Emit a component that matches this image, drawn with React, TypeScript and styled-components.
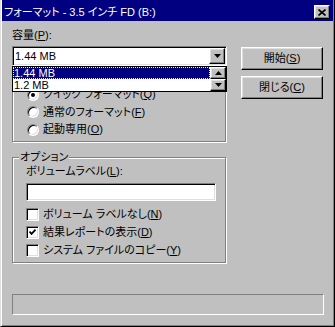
import React from "react";
import styled, { createGlobalStyle } from "styled-components";

const GlobalStyle = createGlobalStyle`
  html, body { margin: 0; padding: 0; background: #c0c0c0; }
  body {
    font-family: "Liberation Sans", "Noto Sans CJK JP", sans-serif;
    font-size: 11px;
    font-feature-settings: "palt";
    color: #000;
  }
  * { box-sizing: border-box; }
`;

const Window = styled.div`
  width: 335px;
  height: 327px;
  background: #c0c0c0;
  border-left: 1px solid #dfdfdf;
  border-right: 1px solid #000;
  border-bottom: 1px solid #000;
  box-shadow: inset 1px 0 0 #fff, inset -1px -1px 0 #808080;
  padding: 0 1px 1px 1px;
  display: flex;
  flex-direction: column;
`;

const TitleBar = styled.div`
  height: 21px;
  background: #000080;
  display: flex;
  align-items: center;
  justify-content: space-between;
  padding: 3px 3px 0 2px;
`;

const Title = styled.span`
  color: #fff;
  line-height: 13px;
  white-space: nowrap;
`;

const Raised = styled.div`
  background: #c0c0c0;
  border: 1px solid;
  border-color: #fff #000 #000 #fff;
  box-shadow: inset -1px -1px 0 #808080, inset 1px 1px 0 #dfdfdf;
  display: flex;
  align-items: center;
  justify-content: center;
`;

const CloseBtn = styled(Raised)`
  width: 16px;
  height: 14px;
`;

const Body = styled.div`
  padding: 8px 9px 0 10px;
  display: flex;
  flex-direction: column;
`;

const Top = styled.div`
  display: flex;
  align-items: flex-start;
  gap: 14px;
`;

const LeftCol = styled.div`
  width: 215px;
  display: flex;
  flex-direction: column;
`;

const Label = styled.div`
  line-height: 13px;
  height: 13px;
  white-space: nowrap;
`;

const Text = styled.span`
  white-space: nowrap;
  line-height: 13px;
`;

const Key = styled.span`
  text-decoration: underline;
  text-underline-offset: 1px;
`;

const ComboWrap = styled.div`
  position: relative;
  margin-top: 4px;
  height: 20px;
`;

const Sunken = styled.div`
  background: #fff;
  border: 1px solid;
  border-color: #808080 #fff #fff #808080;
  box-shadow: inset 1px 1px 0 #000, inset -1px -1px 0 #dfdfdf;
`;

const Combo = styled(Sunken)`
  height: 20px;
  display: flex;
  align-items: center;
  padding: 0 1px 0 2px;
  line-height: 13px;
`;

const ArrowBtn = styled(Raised)<{ $h: number }>`
  width: 16px;
  height: ${(p) => p.$h}px;
  margin-left: auto;
  flex: none;
`;

const DropList = styled.div`
  position: absolute;
  top: 100%;
  left: 0;
  width: 215px;
  border: 1px solid #000;
  background: #fff;
  display: flex;
  z-index: 2;
`;

const Items = styled.div`
  flex: 1;
  display: flex;
  flex-direction: column;
`;

const Item = styled.div<{ $sel?: boolean }>`
  height: 12px;
  line-height: 12px;
  padding-left: 1px;
  background: ${(p) => (p.$sel ? "#000080" : "#fff")};
  color: ${(p) => (p.$sel ? "#fff" : "#000")};
  outline: ${(p) => (p.$sel ? "1px dotted #ffff80" : "none")};
  outline-offset: -1px;
`;

const ScrollCol = styled.div`
  width: 16px;
  display: flex;
  flex-direction: column;
`;

const Group = styled.div<{ $mt: number; $pt: number; $pl: number }>`
  position: relative;
  width: 214px;
  margin-top: ${(p) => p.$mt}px;
  padding: ${(p) => p.$pt}px 0 3px ${(p) => p.$pl}px;
  border: 1px solid #808080;
  box-shadow: inset 1px 1px 0 #fff, 1px 1px 0 #fff;
  display: flex;
  flex-direction: column;
`;

const Legend = styled.span`
  position: absolute;
  top: -7px;
  left: 6px;
  padding: 0 1px;
  line-height: 13px;
  background: #c0c0c0;
  white-space: nowrap;
`;

const OptRow = styled.div<{ $h: number }>`
  height: ${(p) => p.$h}px;
  display: flex;
  align-items: center;
  gap: 4px;
`;

const Radio = styled.span<{ $on?: boolean }>`
  width: 12px;
  height: 12px;
  border-radius: 50%;
  background: #fff;
  border: 1px solid;
  border-color: #808080 #fff #fff #808080;
  box-shadow: inset 1px 1px 0 #000, inset -1px -1px 0 #dfdfdf;
  display: flex;
  align-items: center;
  justify-content: center;
  flex: none;
  &::after {
    content: "";
    width: 4px;
    height: 4px;
    border-radius: 50%;
    background: ${(p) => (p.$on ? "#000" : "transparent")};
  }
`;

const Check = styled(Sunken)`
  width: 13px;
  height: 13px;
  flex: none;
  display: flex;
  align-items: center;
  justify-content: center;
`;

const TextBox = styled(Sunken)`
  width: 190px;
  height: 18px;
  margin-top: 5px;
`;

const Checks = styled.div`
  margin-top: 4px;
  display: flex;
  flex-direction: column;
`;

const RightCol = styled.div`
  width: 82px;
  margin-top: 18px;
  display: flex;
  flex-direction: column;
  gap: 6px;
`;

const Button = styled(Raised)`
  height: 23px;
  line-height: 13px;
`;

const StatusBar = styled.div`
  margin-top: 31px;
  width: 312px;
  height: 21px;
  border: 1px solid;
  border-color: #808080 #fff #fff #808080;
`;

function Down() {
  return (
    <svg width="7" height="4" viewBox="0 0 7 4">
      <path d="M0 0h7L3.5 4z" fill="#000" />
    </svg>
  );
}

function Up() {
  return (
    <svg width="7" height="4" viewBox="0 0 7 4">
      <path d="M0 4h7L3.5 0z" fill="#000" />
    </svg>
  );
}

export default function App() {
  return (
    <>
      <GlobalStyle />
      <Window>
        <TitleBar>
          <Title>フォーマット - 3.5 インチ FD (B:)</Title>
          <CloseBtn>
            <svg width="8" height="7" viewBox="0 0 8 7">
              <path d="M0.5 0.5L7.5 6.5M7.5 0.5L0.5 6.5" stroke="#000" strokeWidth="1.6" />
            </svg>
          </CloseBtn>
        </TitleBar>
        <Body>
          <Top>
            <LeftCol>
              <Label>容量(<Key>P</Key>):</Label>
              <ComboWrap>
                <Combo>
                  1.44 MB
                  <ArrowBtn $h={16}><Down /></ArrowBtn>
                </Combo>
                <DropList>
                  <Items>
                    <Item $sel>1.44 MB</Item>
                    <Item>1.2 MB</Item>
                  </Items>
                  <ScrollCol>
                    <ArrowBtn $h={12}><Up /></ArrowBtn>
                    <ArrowBtn $h={12}><Down /></ArrowBtn>
                  </ScrollCol>
                </DropList>
              </ComboWrap>
              <Group $mt={9} $pt={10} $pl={14}>
                <OptRow $h={17}><Radio $on /><Text>クイック フォーマット(<Key>Q</Key>)</Text></OptRow>
                <OptRow $h={18}><Radio /><Text>通常のフォーマット(<Key>F</Key>)</Text></OptRow>
                <OptRow $h={17}><Radio /><Text>起動専用(<Key>O</Key>)</Text></OptRow>
              </Group>
              <Group $mt={15} $pt={7} $pl={13}>
                <Legend>オプション</Legend>
                <Label>ボリュームラベル(<Key>L</Key>):</Label>
                <TextBox />
                <Checks>
                  <OptRow $h={18}><Check /><Text>ボリューム ラベルなし(<Key>N</Key>)</Text></OptRow>
                  <OptRow $h={18}>
                    <Check>
                      <svg width="7" height="7" viewBox="0 0 7 7">
                        <path d="M0.5 2.5L2.5 4.8L6.5 0.7" stroke="#000" strokeWidth="1.8" fill="none" />
                      </svg>
                    </Check>
                    <Text>結果レポートの表示(<Key>D</Key>)</Text>
                  </OptRow>
                  <OptRow $h={18}><Check /><Text>システム ファイルのコピー(<Key>Y</Key>)</Text></OptRow>
                </Checks>
              </Group>
            </LeftCol>
            <RightCol>
              <Button><Text>開始(<Key>S</Key>)</Text></Button>
              <Button><Text>閉じる(<Key>C</Key>)</Text></Button>
            </RightCol>
          </Top>
          <StatusBar />
        </Body>
      </Window>
    </>
  );
}
